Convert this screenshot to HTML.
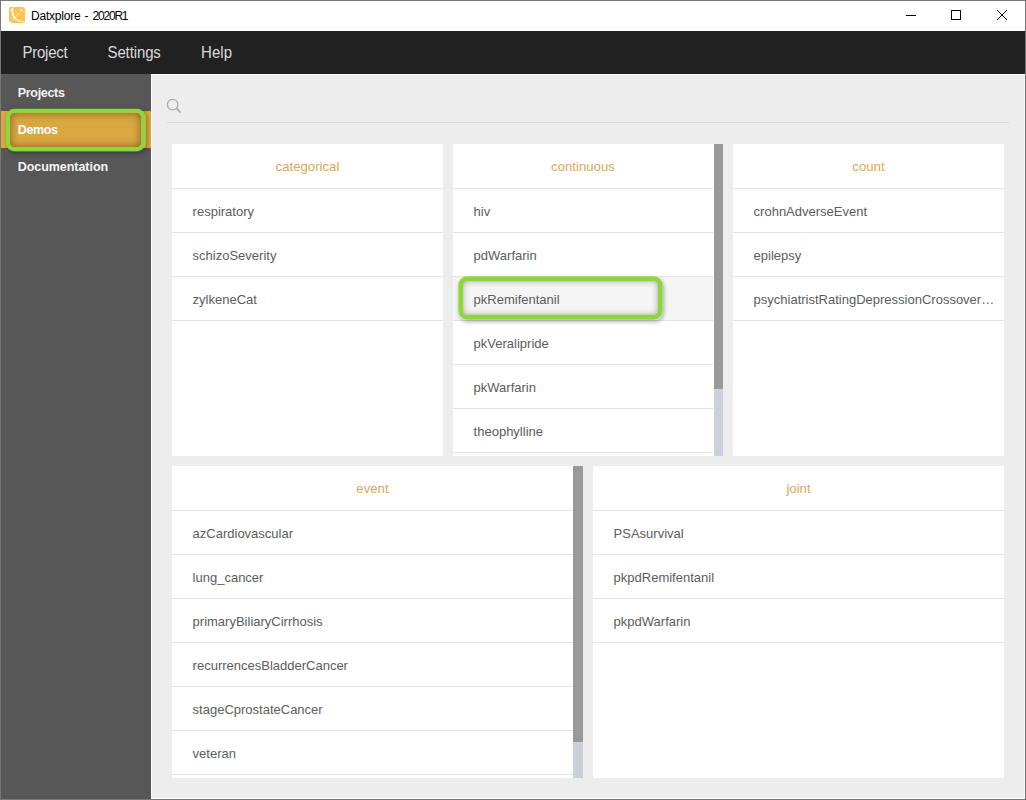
<!DOCTYPE html>
<html><head><meta charset="utf-8">
<style>
*{box-sizing:border-box;margin:0;padding:0}
html,body{width:1026px;height:800px;overflow:hidden;background:#fff;font-family:"Liberation Sans",sans-serif}
.abs{position:absolute}
#win{position:absolute;left:0;top:0;width:1026px;height:800px;border:1px solid #777;overflow:hidden}
#title{position:absolute;left:1px;top:1px;width:1024px;height:30px;background:#fff}
#ttext{position:absolute;left:30px;top:7px;font-size:12px;line-height:16px;color:#000;white-space:nowrap}
#menu{position:absolute;left:1px;top:31px;width:1024px;height:43px;background:#212121}
.mi{position:absolute;top:0;font-size:15px;letter-spacing:-0.25px;line-height:43px;color:#dadada;transform:scaleY(1.05);transform-origin:0 26.5px;white-space:nowrap}
#side{position:absolute;left:1px;top:74px;width:150px;height:725px;background:#575757}
.si{position:absolute;left:16.75px;margin-top:1px;font-size:12.5px;font-weight:bold;color:#f4f4f4;white-space:nowrap;line-height:16px;letter-spacing:-0.15px}
#content{position:absolute;left:151px;top:74px;width:874px;height:725px;background:#ededed;border:1px solid #fff;border-right:1px solid #f6f6f6}
.card{position:absolute;background:#fff;overflow:hidden}
.hd{height:45px;border-bottom:1px solid #e4e4e4;text-align:center;color:#dfa753;font-size:13.2px;line-height:44px;padding-top:1px}
.row{height:44px;border-bottom:1px solid #e4e4e4;color:#5c5c5c;font-size:13px;line-height:43px;padding-top:1px;padding-left:20.6px;white-space:nowrap}
.sb{position:absolute;top:0;background:#ccd1d9}
.th{position:absolute;left:0;top:0;width:100%;background:#999}
</style></head><body>
<div id="win"></div>
<div id="title">
  <svg class="abs" style="left:8px;top:6px" width="16" height="16" viewBox="0 0 16 16">
    <path d="M0 0H13.2Q16 0 16 2.8V16H2.6L0 13.4Z" fill="#fdc450"/>
    <path d="M1 3.7L4.2 0.3C3.8 4.2 4.6 9.3 8 12.1C10.4 14 13 14.4 16 14.4V15.3C12.2 15.3 8.6 14.6 6.1 12.6C3.7 10.6 2.6 7.2 2.6 3.4Z" fill="#fff"/>
    <path d="M1.9 15.2L10.8 5.2" stroke="#fff" stroke-width="0.8" opacity="0.65"/>
    <circle cx="12.5" cy="3.2" r="1.1" fill="#fff"/>
  </svg>
  <div id="ttext"><span class="abs" style="left:0;letter-spacing:-0.2px">Datxplore</span><span class="abs" style="left:53.5px">-</span><span class="abs" style="left:61.5px;letter-spacing:-1.2px">2020R1</span></div>
  <svg class="abs" style="left:900px;top:0" width="124" height="30">
    <path d="M5 14.5H15" stroke="#000" stroke-width="1"/>
    <rect x="50.5" y="9.5" width="9" height="9" stroke="#000" stroke-width="1" fill="none"/>
    <path d="M96 9L106 19M106 9L96 19" stroke="#000" stroke-width="1"/>
  </svg>
</div>
<div id="menu">
  <div class="mi" style="left:21.5px">Project</div>
  <div class="mi" style="left:106.5px;letter-spacing:-0.12px">Settings</div>
  <div class="mi" style="left:200px;letter-spacing:0.05px">Help</div>
</div>
<div id="side">
  <div class="si" style="top:10px;letter-spacing:-0.32px">Projects</div>
  <div class="abs" style="left:0;top:37px;width:150px;height:37px;background:#d9a841"></div>
  <div class="si" style="top:47px;letter-spacing:-0.4px;color:#fff">Demos</div>
  <div class="si" style="top:84px;letter-spacing:-0.05px">Documentation</div>
</div>
<div id="content"></div>

<svg class="abs" style="left:166px;top:98px" width="17" height="16" viewBox="0 0 17 16">
  <circle cx="6.6" cy="6.6" r="5.3" stroke="#a9a9a9" stroke-width="1.2" fill="none"/>
  <path d="M10.4 10.4L14.6 14.6" stroke="#a9a9a9" stroke-width="1.5"/>
</svg>
<div class="abs" style="left:167px;top:122px;width:842px;height:1px;background:#d8d8d8"></div>

<div class="card" style="left:172px;top:144px;width:271px;height:312px">
  <div class="hd">categorical</div>
  <div class="row">respiratory</div>
  <div class="row">schizoSeverity</div>
  <div class="row">zylkeneCat</div>
</div>

<div class="card" style="left:453px;top:144px;width:270px;height:312px">
  <div style="width:260px">
  <div class="hd">continuous</div>
  <div class="row">hiv</div>
  <div class="row">pdWarfarin</div>
  <div class="row" style="background:#f5f5f5">pkRemifentanil</div>
  <div class="row">pkVeralipride</div>
  <div class="row">pkWarfarin</div>
  <div class="row">theophylline</div>
  <div class="row"></div>
  </div>
  <div class="sb" style="left:261px;width:9px;height:312px"><div class="th" style="height:245px"></div></div>
</div>

<div class="card" style="left:733px;top:144px;width:271px;height:312px">
  <div class="hd">count</div>
  <div class="row">crohnAdverseEvent</div>
  <div class="row">epilepsy</div>
  <div class="row">psychiatristRatingDepressionCrossover…</div>
</div>

<div class="card" style="left:172px;top:466px;width:411px;height:312px">
  <div style="width:401px">
  <div class="hd">event</div>
  <div class="row">azCardiovascular</div>
  <div class="row">lung_cancer</div>
  <div class="row">primaryBiliaryCirrhosis</div>
  <div class="row">recurrencesBladderCancer</div>
  <div class="row">stageCprostateCancer</div>
  <div class="row">veteran</div>
  <div class="row"></div>
  </div>
  <div class="sb" style="left:401px;width:10px;height:312px"><div class="th" style="height:276px"></div></div>
</div>

<div class="card" style="left:593px;top:466px;width:411px;height:312px">
  <div class="hd">joint</div>
  <div class="row">PSAsurvival</div>
  <div class="row">pkpdRemifentanil</div>
  <div class="row">pkpdWarfarin</div>
</div>


<div class="abs" style="left:5.55px;top:108.55px;width:140.05px;height:43.10px;border-radius:8.65px;box-shadow:1px 1px 4px rgba(0,0,0,0.35)"></div>
<div class="abs" style="left:9.85px;top:112.85px;width:131.45px;height:34.50px;border-radius:4.35px;box-shadow:inset 0 0 8px rgba(60,30,0,0.55)"></div>
<svg class="abs" style="left:0;top:0" width="1026" height="800"><rect x="7.85" y="110.85" width="135.45" height="38.5" rx="6.5" fill="none" stroke="#8dd63f" stroke-width="4"/></svg>
<div class="abs" style="left:458.25px;top:276.35px;width:204.45px;height:43.35px;border-radius:8.95px;box-shadow:1px 2px 4px rgba(0,0,0,0.3)"></div>
<div class="abs" style="left:463.15px;top:281.25px;width:194.65px;height:33.55px;border-radius:4.05px;box-shadow:inset 0 0 7px rgba(0,0,0,0.3)"></div>
<svg class="abs" style="left:0;top:0" width="1026" height="800"><rect x="460.7" y="278.8" width="199.55" height="38.45" rx="6.5" fill="none" stroke="#8dd63f" stroke-width="4.9"/></svg>
</body></html>
